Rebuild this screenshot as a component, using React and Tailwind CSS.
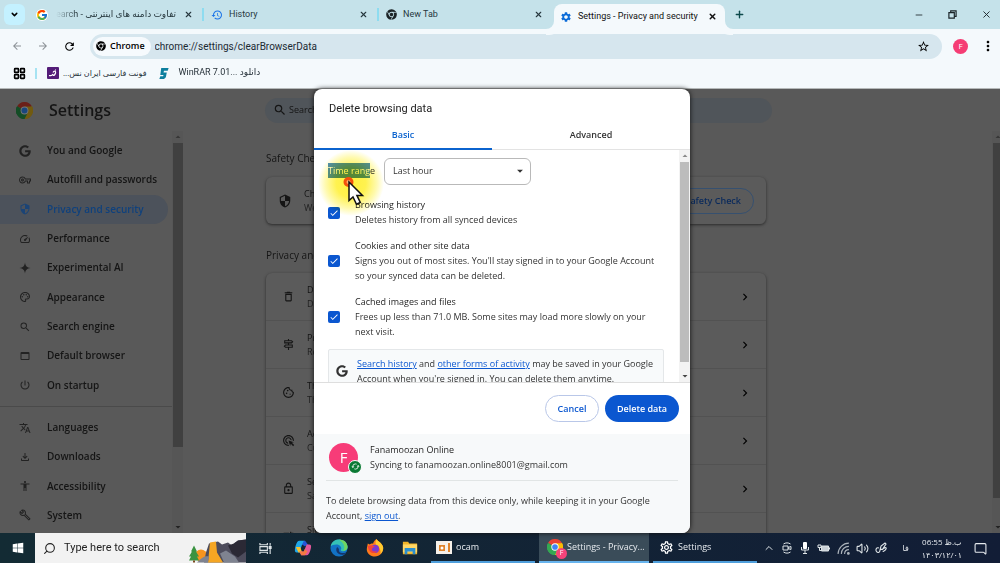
import React from 'react';
import { FcGoogle } from 'react-icons/fc';
import { FaGoogle, FaChrome, FaWindows } from 'react-icons/fa';
import {
  MdAccessibility, MdAdsClick, MdArrowBack, MdArrowDropDown, MdArrowForward, MdCheck,
  MdChevronRight, MdDeleteOutline, MdHistory, MdMoreVert, MdOutlineBuild,
  MdOutlineCookie, MdOutlineFileDownload, MdOutlineLock, MdOutlinePalette,
  MdOutlineSettings, MdOutlineSignpost, MdOutlineVpnKey, MdOutlineWebAsset,
  MdPowerSettingsNew, MdRefresh, MdSearch, MdSecurity, MdSettings, MdSpeed,
  MdStarBorder, MdSync, MdTranslate, MdTune,
} from 'react-icons/md';
import {
  ChevronDown, ChevronUp, LayoutGrid, MessageSquare, Minus, Plus, Search, Volume2, X,
} from 'lucide-react';

const Sparkle = (props) => (
  <svg viewBox="0 0 24 24" fill="currentColor" {...props}>
    <path d="M12 1c1 7 4 10 11 11-7 1-10 4-11 11-1-7-4-10-11-11 7-1 10-4 11-11z" />
  </svg>
);

const ChromeLogo = ({ dim, className }) => (
  <svg viewBox="0 0 48 48" className={className}>
    <path d="M24 24 3.2 12A24 24 0 0 1 44.800 12z" fill={dim ? '#6b2018' : '#ea4335'} />
    <path d="M24 24 44.800 12A24 24 0 0 1 24 48z" fill={dim ? '#715a10' : '#fbbc05'} />
    <path d="M24 24v24A24 24 0 0 1 3.200 12z" fill={dim ? '#144d26' : '#34a853'} />
    <path d="M24 13h21.300A24 24 0 0 1 24 48l9.500-18.500z" fill={dim ? '#715a10' : '#fbbc05'} />
    <path d="M3.200 12 14.500 29.500 33.500 29.500 24 48A24 24 0 0 1 3.200 12z" fill={dim ? '#144d26' : '#34a853'} />
    <circle cx="24" cy="24" r="11" fill={dim ? '#777' : '#fff'} />
    <circle cx="24" cy="24" r="8.500" fill={dim ? '#1a477d' : '#4285f4'} />
  </svg>
);

const menu = [
  { icon: FaGoogle, label: 'You and Google' },
  { icon: MdOutlineVpnKey, label: 'Autofill and passwords' },
  { icon: MdSecurity, label: 'Privacy and security', active: true },
  { icon: MdSpeed, label: 'Performance' },
  { icon: Sparkle, label: 'Experimental AI' },
  { icon: MdOutlinePalette, label: 'Appearance' },
  { icon: MdSearch, label: 'Search engine' },
  { icon: MdOutlineWebAsset, label: 'Default browser' },
  { icon: MdPowerSettingsNew, label: 'On startup' },
];

const advancedMenu = [
  { icon: MdTranslate, label: 'Languages' },
  { icon: MdOutlineFileDownload, label: 'Downloads' },
  { icon: MdAccessibility, label: 'Accessibility' },
  { icon: MdOutlineBuild, label: 'System' },
];

const privacyRows = [
  { icon: MdDeleteOutline, title: 'Delete browsing data', desc: 'Delete history, cookies, cache, and more' },
  { icon: MdOutlineSignpost, title: 'Privacy Guide', desc: 'Review key privacy and security controls' },
  { icon: MdOutlineCookie, title: 'Third-party cookies', desc: 'Third-party cookies are blocked in Incognito mode' },
  { icon: MdAdsClick, title: 'Ad privacy', desc: 'Customize the info used by sites to show you ads' },
  { icon: MdOutlineLock, title: 'Security', desc: 'Safe Browsing and other security settings' },
  { icon: MdTune, title: 'Site settings', desc: 'Controls what information sites can use and show' },
];

const dataTypes = [
  { id: 'history', title: 'Browsing history', desc: 'Deletes history from all synced devices' },
  {
    id: 'cookies',
    title: 'Cookies and other site data',
    desc: "Signs you out of most sites. You'll stay signed in to your Google Account so your synced data can be deleted.",
  },
  {
    id: 'cache',
    title: 'Cached images and files',
    desc: 'Frees up less than 71.0 MB. Some sites may load more slowly on your next visit.',
  },
];

const Tab = ({ icon, children, rtl }) => (
  <div className="flex w-[175px] items-center border-r-2 border-[#8edcf0] pr-[9px] pl-[7px]">
    {icon}
    {rtl ? (
      <span dir="rtl" className="ml-2 min-w-0 flex-1 overflow-hidden whitespace-nowrap [mask-image:linear-gradient(to_right,transparent,black_20px)]">
        {children}
      </span>
    ) : (
      <span className="ml-[6px] min-w-0 flex-1 truncate">{children}</span>
    )}
    <button aria-label="Close tab" className="ml-2"><X className="size-[9px]" strokeWidth={3} /></button>
  </div>
);

const TabStrip = () => (
  <header className="flex h-[29px] shrink-0 bg-[#c5e2ea] font-['Roboto','DejaVu_Sans',sans-serif] text-[9px] text-[#27383e]">
    <button aria-label="Search tabs" className="mt-1 mr-1 ml-1 grid h-[21px] w-[21px] shrink-0 place-items-center rounded-md bg-[#c4f1ff] text-black">
      <ChevronDown className="size-[9px]" strokeWidth={4} />
    </button>
    <div className="flex min-w-0 items-center">
      <Tab rtl icon={<FcGoogle className="size-3 shrink-0 rounded-full bg-white" />}>تفاوت دامنه های اینترنتی - Google Search</Tab>
      <Tab icon={<MdHistory className="size-3 text-[#1a73e8]" />}>History</Tab>
      <div className="flex w-[175px] items-center pr-[11px] pl-[7px]">
        <FaChrome className="size-[11px] text-[#1b2326]" />
        <span className="ml-[6px] flex-1">New Tab</span>
        <button aria-label="Close tab"><X className="size-[9px]" strokeWidth={3} /></button>
      </div>
    </div>
    <div className="relative mt-1 flex w-[171px] shrink-0 items-center rounded-t-lg bg-[#f4f9fc] px-1 text-[#111]">
      <span className="absolute bottom-0 -left-2 size-2 rounded-br-lg shadow-[3px_3px_0_3px_#f4f9fc]" />
      <span className="absolute -right-2 bottom-0 size-2 rounded-bl-lg shadow-[-3px_3px_0_3px_#f4f9fc]" />
      <MdSettings className="ml-[2px] size-3 text-[#0b6bd8]" />
      <span className="ml-[6px] flex-1 whitespace-nowrap">Settings - Privacy and security</span>
      <button aria-label="Close tab" className="mr-1"><X className="size-[9px]" strokeWidth={4} /></button>
    </div>
    <button aria-label="New tab" className="ml-[5px] px-1 text-[#0d4a4c]"><Plus className="size-[11px]" strokeWidth={3} /></button>
    <div className="ml-auto flex items-center gap-6 pr-2 text-[#1a2428]">
      <button aria-label="Minimize"><Minus className="size-[10px]" /></button>
      <button aria-label="Restore">
        <svg viewBox="0 0 10 10" className="size-[9px]" fill="none" stroke="currentColor" strokeWidth="1.300">
          <path d="M1 3h6v6H1zM3 3V1h6v6H7" />
        </svg>
      </button>
      <button aria-label="Close"><X className="size-[11px]" /></button>
    </div>
  </header>
);

const Toolbar = () => (
  <div className="shrink-0 border-b border-[#b5b9b9] bg-[#f4f9fc]">
    <div className="flex h-[34px] items-center pr-1 pl-[11px]">
      <div className="flex gap-[14px]">
        <button aria-label="Back"><MdArrowBack className="size-3 text-[#8b9296]" /></button>
        <button aria-label="Forward"><MdArrowForward className="size-3 text-[#8b9296]" /></button>
        <button aria-label="Reload"><MdRefresh className="size-[13px] text-black" /></button>
      </div>
      <div className="ml-[14px] flex h-[25px] flex-1 items-center rounded-full bg-[#d6e6ee] pr-3 pl-[3px]">
        <span className="flex h-[19px] items-center gap-1 rounded-full bg-[#f6fafd] px-[3px] pr-[6px] text-[9px] font-semibold text-black">
          <FaChrome className="size-[10px]" /> Chrome
        </span>
        <input
          aria-label="Address"
          defaultValue="chrome://settings/clearBrowserData"
          className="ml-1 min-w-0 flex-1 bg-transparent font-['Roboto',sans-serif] text-[10px] text-[#1c2a33] outline-none"
        />
        <button aria-label="Bookmark this tab"><MdStarBorder className="size-[13px] text-black" /></button>
      </div>
      <button aria-label="Profile" className="ml-[11px] grid size-[15px] place-items-center rounded-full bg-[#f53d74] text-[8px] text-white">F</button>
      <button aria-label="Menu" className="ml-3"><MdMoreVert className="size-4 text-black" /></button>
    </div>
    <nav className="flex h-[25px] items-center pb-[5px] pl-[13px] text-[#27323a]">
      <LayoutGrid className="size-[13px] text-black" strokeWidth={3} />
      <span className="ml-[9px] h-[11px] w-[2px] bg-[#a6e3f2]" />
      <a href="#font" className="ml-[10px] flex items-center gap-1">
        <svg viewBox="0 0 12 12" className="size-3">
          <rect width="12" height="12" rx="1" fill="#531c78" />
          <path d="M2 8.500c2 .5 3.500 0 4-1.500M6 5.500c1-2 3-1.500 2.500.5C8 8 7 8.500 6 8.500M8 3h1" stroke="#fff" strokeWidth="1.200" fill="none" />
        </svg>
        <span dir="rtl" className="text-[8px]">فونت فارسی ایران نس...</span>
      </a>
      <a href="#winrar" className="ml-3 flex items-center gap-2">
        <svg viewBox="0 0 12 14" className="h-[13px] w-3">
          <path d="M3 1h8l-1 3H6l-.5 2H9l-1 5-2 2H1l1-3h3l.5-1.500H2z" fill="#0d7f9e" />
        </svg>
        <span className="font-['Roboto','DejaVu_Sans',sans-serif] text-[9px]">WinRAR 7.01... دانلود</span>
      </a>
    </nav>
  </div>
);

const MenuItem = ({ icon: Icon, label, active }) => (
  <a
    href="#settings"
    className={
      active
        ? 'flex items-center gap-4 rounded-r-full bg-[#4c525b] pl-[19px] text-[#0f417d]'
        : 'flex items-center gap-4 pl-[19px] text-[#151515]'
    }
  >
    <Icon className="size-3 shrink-0 opacity-80" />
    {label}
  </a>
);

const Scrollbar = ({ light, children }) => (
  <div
    aria-hidden="true"
    className={
      light
        ? 'flex w-[11px] shrink-0 flex-col items-center bg-[#f3f3f3] text-[#444]'
        : 'flex w-[11px] shrink-0 flex-col items-center bg-[#565656] text-[#222]'
    }
  >
    <MdArrowDropDown className="size-3 rotate-180 opacity-60" />
    {children}
    <MdArrowDropDown className="mt-auto size-3" />
  </div>
);

const SettingsPage = () => (
  <div className="flex h-full flex-col bg-[#595959] text-[#151515]">
    <div className="flex h-[42px] shrink-0 items-center pl-4">
      <div className="flex w-[249px] items-center gap-4">
        <ChromeLogo dim className="size-[17px]" />
        <h1 className="text-[16px] font-semibold">Settings</h1>
      </div>
      <label className="flex h-[25px] w-[507px] items-center rounded-full bg-[#50555a] pl-2">
        <MdSearch className="size-[14px]" />
        <input aria-label="Search settings" placeholder="Search settings" className="ml-[2px] text-[9px] outline-none placeholder:text-[#151515]" />
      </label>
    </div>
    <div className="flex min-h-0 flex-1">
      <aside className="flex w-[183px] shrink-0">
        <nav className="min-w-0 flex-1 overflow-hidden pt-[5px] text-[10px] font-semibold">
          <div className="grid h-[264px] auto-rows-fr pr-1">
            {menu.map((item) => <MenuItem key={item.label} {...item} />)}
          </div>
          <hr className="my-[6px] border-[#4a4a4a]" />
          <div className="grid h-[117px] auto-rows-fr pr-1">
            {advancedMenu.map((item) => <MenuItem key={item.label} {...item} />)}
          </div>
        </nav>
        <Scrollbar><div className="h-[304px] w-[10px] bg-[#404040]" /></Scrollbar>
      </aside>
      <main className="min-w-0 flex-1 overflow-hidden pl-[83px] text-[9px]">
        <div className="max-w-[500px]">
          <h2 className="pt-5 text-[10px] leading-[14px]">Safety Check</h2>
          <section className="mt-3 flex h-[47px] items-center rounded-md bg-[#5b5b5b] px-3 shadow-[0_1px_3px_#2b2b2b]">
            <MdSecurity className="size-[14px]" />
            <div className="ml-3 flex-1 leading-[14px]">
              <p>Chrome regularly checks that your browser is safe</p>
              <p className="text-[#222]">We'll let you know if anything needs your review</p>
            </div>
            <button className="h-[26px] rounded-full border border-[#36506f] px-3 font-semibold text-[#0a2a5c]">Go to Safety Check</button>
          </section>
          <h2 className="pt-6 text-[10px] leading-[14px]">Privacy and security</h2>
          <section className="mt-[11px] rounded-md bg-[#5b5b5b] shadow-[0_1px_3px_#2b2b2b]">
            {privacyRows.map(({ icon: Icon, title, desc }) => (
              <a key={title} href="#privacy" className="flex h-12 items-center border-b border-[#525252] pr-[14px] pl-4">
                <Icon className="size-[13px]" />
                <div className="ml-3 flex-1 leading-[14px]">
                  <p>{title}</p>
                  <p className="text-[#222]">{desc}</p>
                </div>
                <MdChevronRight className="size-[14px] text-black" />
              </a>
            ))}
          </section>
        </div>
      </main>
      <div className="flex w-2 overflow-hidden">
        <Scrollbar><div className="h-[355px] w-[10px] bg-[#404040]" /></Scrollbar>
      </div>
    </div>
  </div>
);

const ClickPointer = () => (
  <div className="pointer-events-none absolute top-0 left-1 h-[66px] w-[66px]">
    <div className="absolute inset-0 rounded-full bg-[radial-gradient(circle_closest-side,#fff03c_0%,#fff250_45%,#fffab0_78%,#ffffff_100%)] mix-blend-multiply" />
    <svg viewBox="0 0 66 66" className="absolute inset-0">
      <circle cx="30.500" cy="32" r="3.500" fill="#ffb070" stroke="#f2500c" strokeWidth="3" />
      <path d="M31 32v18.500l4-3.600 3.500 7.300 3.800-1.800-3.400-7h5.600z" fill="#fff" stroke="#111" strokeWidth="1.500" />
    </svg>
  </div>
);

const DeleteDialog = () => (
  <div role="dialog" aria-label="Delete browsing data" className="relative flex w-[376px] flex-col overflow-hidden rounded-lg bg-white text-[9px] text-[#333] shadow-[0_0_5px_#111]">
    <h2 className="px-[15px] pt-3 font-['Roboto',sans-serif] text-[11px] leading-4 text-[#222]">Delete browsing data</h2>
    <div role="tablist" className="mt-1 flex h-[29px] shrink-0 font-semibold">
      <button role="tab" aria-selected="true" className="w-[178px] border-b-2 border-[#0b63ce] text-[#0b63ce]">Basic</button>
      <button role="tab" className="flex-1 border-b border-[#e3e3e3]">Advanced</button>
    </div>
    <div className="relative flex h-[233px] min-h-0 border-b border-[#dedede]">
      <div className="min-w-0 flex-1 overflow-hidden pt-2 pr-[15px] pl-[14px]">
        <div className="flex h-[26px] items-center">
          <label htmlFor="range" className="w-14"><span className="bg-[#5490c4] py-[1px] text-white">Time rang</span>e</label>
          <div className="grid w-[147px] items-center">
            <select id="range" className="col-start-1 row-start-1 h-[27px] appearance-none rounded-md border border-[#b9b9b9] px-2 outline-none">
              <option>Last hour</option>
              <option>Last 24 hours</option>
              <option>All time</option>
            </select>
            <MdArrowDropDown className="pointer-events-none col-start-1 row-start-1 mr-1 size-[14px] justify-self-end" />
          </div>
        </div>
        <div className="mt-[14px] flex flex-col gap-3">
          {dataTypes.map(({ id, title, desc }) => (
            <div key={id} className="flex items-center">
              <span className="grid w-[27px] shrink-0 items-center">
                <input type="checkbox" id={id} defaultChecked className="col-start-1 row-start-1 size-3 appearance-none rounded-[2px] bg-[#0b57d0]" />
                <MdCheck className="pointer-events-none col-start-1 row-start-1 ml-[1px] size-[10px] text-white" />
              </span>
              <label htmlFor={id} className="leading-[15px]">
                <span className="block leading-[14px] text-[#1f1f1f]">{title}</span>
                {desc}
              </label>
            </div>
          ))}
        </div>
        <div className="mt-[10px] flex items-center rounded-[2px] border border-[#e4e7e9] bg-[#f8fafb] py-[6px] pl-[7px]">
          <FaGoogle className="mr-[9px] size-3 shrink-0" />
          <p className="leading-[15px]">
            <a href="#search-history" className="text-[#0b57d0] underline">Search history</a> and{' '}
            <a href="#activity" className="text-[#0b57d0] underline">other forms of activity</a> may be saved in your Google Account when you're signed in. You can delete them anytime.
          </p>
        </div>
      </div>
      <Scrollbar light><div className="h-[200px] w-[9px] bg-[#bcbcbc]" /></Scrollbar>
      <ClickPointer />
    </div>
    <div className="flex h-[51px] items-center justify-end gap-[6px] pr-[11px] font-semibold">
      <button className="h-[27px] w-[54px] rounded-full border border-[#b9c7e8] text-[#0b57d0]">Cancel</button>
      <button className="h-[27px] w-[74px] rounded-full bg-[#0b57d0] text-white">Delete data</button>
    </div>
    <div className="flex-1 bg-[#f7f9fa] px-3 leading-[15px]">
      <div className="flex h-[47px] items-center border-b border-[#e1e5e5] pl-[3px]">
        <div className="relative grid size-[29px] place-items-center rounded-full bg-[#f73c78] text-[15px] text-white">
          F
          <span className="absolute -right-1 -bottom-[2px] grid size-[14px] place-items-center rounded-full border border-white bg-[#0b7a35]">
            <MdSync className="size-[9px] rotate-90" />
          </span>
        </div>
        <div className="ml-3">
          <p className="text-[#1f1f1f]">Fanamoozan Online</p>
          <p>Syncing to fanamoozan.online8001@gmail.com</p>
        </div>
      </div>
      <p className="pt-3">
        To delete browsing data from this device only, while keeping it in your Google Account, <a href="#sign-out" className="text-[#0b57d0] underline">sign out</a>.
      </p>
    </div>
  </div>
);

const SearchArt = () => (
  <svg viewBox="0 0 58 29" className="h-full w-[58px]">
    <circle cx="13" cy="22" r="6" fill="#f7941e" />
    <path d="M16 29l2-10 3-9 9-2 4 3 6-2 4 3 3-3 3-2 8-1v23z" fill="#4d4c5c" />
    <path d="M40 12l6-2 4-3 8-1v12l-8 6-6-4z" fill="#2b2935" />
    <path d="M22 9l6-1 1 11 6 10H20z" fill="#f5a623" />
    <path d="M9 29c6-6 8-7 12-6l-1 6zM36 29l-4-9 6-3 9 6 4 6z" fill="#7f8390" />
    <path d="M6 12l3 6H8l3 5H9l2 4H1l2-4H1l3-5H3z" fill="#3a9340" />
    <path d="M5 27h2v2H5z" fill="#7a4a21" />
  </svg>
);

const TaskbarIcons = () => (
  <div className="ml-[13px] flex shrink-0 items-center gap-[18px]">
    <svg viewBox="0 0 14 14" className="size-[13px]" fill="none" stroke="#dfe5e8" strokeWidth="1.200">
      <path d="M1 1v2h8V1M1 13v-2h8v2M1 5h8v4H1zM12 1v3M12 7v6" />
      <path d="M11 5h2v2h-2z" fill="#dfe5e8" />
    </svg>
    <svg viewBox="0 0 20 20" className="ml-1 size-[18px]">
      <path d="M6 2h6l2 4H9L6 15H3c-3 0-2-5-1-8s2-5 4-5z" fill="#1fa7e8" />
      <path d="M2 9l3 6h4l-2-6z" fill="#f5c22f" />
      <path d="M11 2c3 0 3 4 5 4l-4 2-3-2z" fill="#2456d6" />
      <path d="M14 18H8l-2-4h5l3-8h3c3 0 2 4 1 7s-2 5-4 5z" fill="#e2579a" />
      <path d="M8 18l-2-4h5l1-3 3 3-3 4z" fill="#f47a42" />
    </svg>
    <svg viewBox="0 0 20 20" className="size-[18px]">
      <circle cx="10" cy="10" r="9.500" fill="#1272c4" />
      <path d="M.8 8C2 2.500 6 .5 10 .5c6 0 9.500 4 9.500 8.500 0 3-2.500 4.500-5 4.500-3 0-3-1.500-2-2.500C13 8 10 6 7 6 4 6 1.500 7 .8 8z" fill="#35c1b5" />
      <path d="M10 .5c6 0 9.500 4 9.500 8.500 0 3-2.500 4.500-5 4.500 3-4 1-9-4.500-13z" fill="#6fd660" />
      <path d="M8 9c-3 4 1 9 6 8.500 2-.3 3.500-1.500 4-2.500-6 2-9-1-8-4z" fill="#15366b" />
    </svg>
    <svg viewBox="0 0 20 20" className="size-[18px]">
      <path d="M2 5l2 1c1-1 3-1 4-1 0-2 2-4 4-5 0 2 6 4 7 9 1 6-4 10.500-9 10.500S0 16 1 10z" fill="#ff7a1c" />
      <path d="M12 0c0 2 6 4 7 9 .5 3-1 6-3 8 1-4-1-9-5-11-1-2 0-5 1-6z" fill="#ffcb2f" />
      <circle cx="10" cy="11" r="4.500" fill="#7b3bd1" />
      <path d="M2 8c3-2 6-1 8 1-3 0-4 2-3 4 1 1 4 1 5 0-1 4-9 4-10-5z" fill="#f4443c" />
    </svg>
    <svg viewBox="0 0 18 16" className="size-4">
      <path d="M1 1h6l1 2h9v12H1z" fill="#f0b429" />
      <path d="M1 4h16v9H1z" fill="#ffd766" />
      <path d="M3 8h12v7h-3v-3H6v3H3z" fill="#2a8fd0" />
    </svg>
  </div>
);

const TrayIcons = () => (
  <div className="flex items-center gap-[6px] text-[#dfe5e8]">
    <ChevronUp className="size-3" />
    <svg viewBox="0 0 12 12" className="size-3" fill="none" stroke="currentColor">
      <path d="M2 4h5v4H2zM7 5.500l3-1v3l-3-1M2.500 2c2-1.500 5-1.500 7 0M2.500 10c2 1.500 5 1.500 7 0" />
    </svg>
    <svg viewBox="0 0 12 12" className="size-3" fill="none" stroke="currentColor">
      <rect x="4" y="0" width="4" height="7" rx="1" fill="white" stroke="none" />
      <path d="M2.500 5v3h7V5M6 8v3M4 11.500h4" />
    </svg>
    <svg viewBox="0 0 14 12" className="h-3 w-[14px]" fill="none" stroke="currentColor">
      <path d="M4.500 4h7v5h-7z" fill="#c9d0d6" />
      <path d="M12.500 5.500v2M1 3h3v2.500H1zM2.500 6v2.500h2" />
    </svg>
    <svg viewBox="0 0 12 12" className="size-[13px]" fill="none" stroke="currentColor" opacity="0.750">
      <path d="M1 11C1 5.500 5.500 1 11 1M4 11c0-4 3-7 7-7M7 11c0-2.500 1.500-4 4-4" />
      <circle cx="10.500" cy="10.500" r=".8" fill="currentColor" />
    </svg>
    <Volume2 className="size-[13px]" />
    <svg viewBox="0 0 13 12" className="h-3 w-[13px]" fill="none" stroke="currentColor" strokeWidth="1.100">
      <path d="M4 6C1 5 .5 8 1.500 9.500S5 11 5 8l1-4 4-3 1 1-4 6c2-3 5-3 4-1S8 9 8 10M5 8l2-1" />
    </svg>
  </div>
);

const Taskbar = () => (
  <footer className="flex h-[30px] shrink-0 bg-linear-to-r from-[#132b34] to-[#121d36] text-[9px] text-[#e6eaee]">
    <button aria-label="Start" className="grid w-[35px] shrink-0 place-items-center"><FaWindows className="size-3 text-white" /></button>
    <label className="flex w-[211px] shrink-0 items-center bg-[#f2f2f2] pl-2">
      <Search className="size-[13px] -scale-x-100 text-[#222]" />
      <input aria-label="Search" placeholder="Type here to search" className="ml-2 min-w-0 flex-1 font-['Roboto',sans-serif] text-[11px] outline-none placeholder:text-[#222]" />
      <SearchArt />
    </label>
    <TaskbarIcons />
    <div className="ml-[13px] flex shrink-0 gap-1">
      <button className="flex w-[104px] items-center gap-1 border-b-2 border-[#4f9fdc] pl-[5px]">
        <svg viewBox="0 0 16 13" className="h-[13px] w-4">
          <path d="M0 0h16v13H0z" fill="#f6f1ea" />
          <path d="M3 4h6v6H3zM12 2h2v9h-2z" fill="#e0842c" />
          <circle cx="6" cy="7" r="1.500" fill="#fff" />
        </svg>
        ocam
      </button>
      <button className="flex w-[110px] items-center gap-1 border-b-2 border-[#67b4ee] bg-[#3a4c59] pl-2 whitespace-nowrap">
        <span className="relative">
          <ChromeLogo className="size-4" />
          <span className="absolute -right-1 -bottom-1 grid size-[11px] place-items-center rounded-full bg-[#f5437a] text-[7px] text-white">F</span>
        </span>
        Settings - Privacy...
      </button>
      <button className="flex w-[104px] items-center gap-1 border-b-2 border-[#4f9fdc] pl-[6px]">
        <MdOutlineSettings className="size-[15px] text-white" />
        Settings
      </button>
    </div>
    <div className="ml-auto flex items-center pr-[13px]">
      <TrayIcons />
      <span lang="fa" className="ml-[14px] text-[8px]">فا</span>
      <div lang="fa" className="ml-[13px] text-center text-[8px] leading-[13px] whitespace-nowrap">
        <p>06:55 ب.ظ</p>
        <p>۱۴۰۳/۱۲/۰۱</p>
      </div>
      <MessageSquare className="ml-3 size-[13px] -scale-x-100" />
    </div>
  </footer>
);

const App = () => {
  return (
    <div className="flex h-screen flex-col overflow-hidden font-['Open_Sans','DejaVu_Sans',sans-serif]">
      <TabStrip />
      <Toolbar />
      <div className="relative min-h-0 flex-1">
        <SettingsPage />
        {/* Modal layer */}
        <div className="absolute inset-0 flex justify-center pl-1">
          <DeleteDialog />
        </div>
      </div>
      <Taskbar />
    </div>
  );
};

export default App;
